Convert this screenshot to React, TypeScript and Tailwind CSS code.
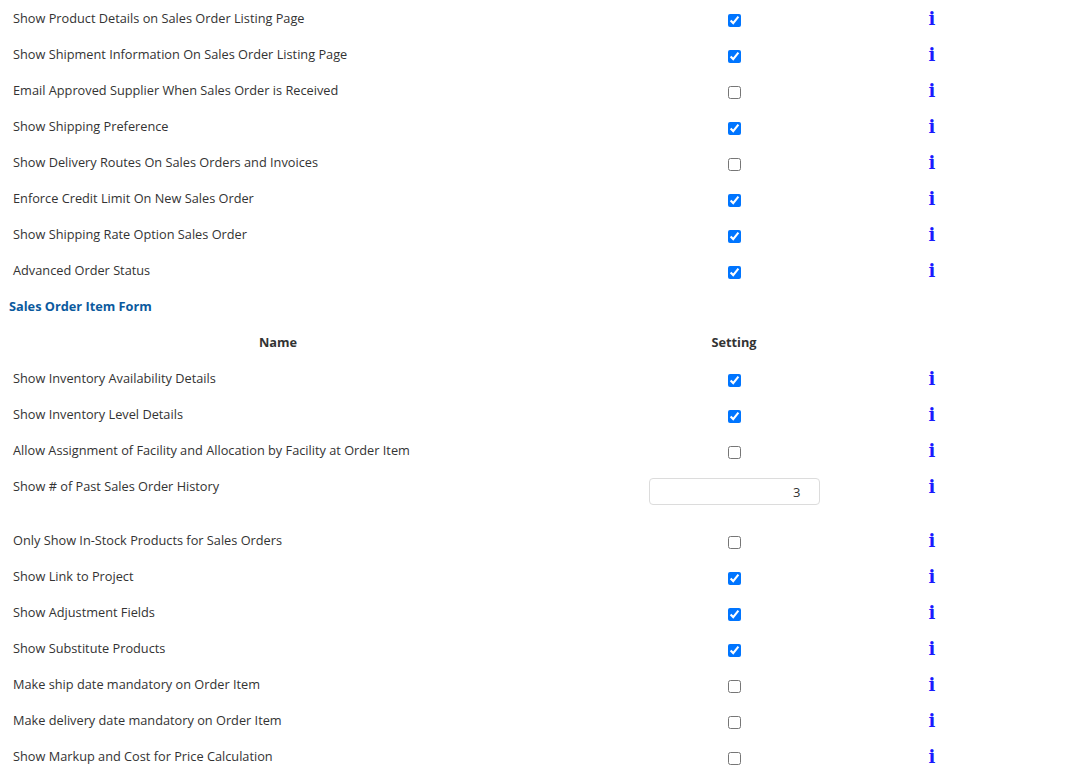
import React from 'react';

type Row = { label: string; checked?: boolean; number?: string };

const ORDER_ROWS: Row[] = [
  { label: 'Show Product Details on Sales Order Listing Page', checked: true },
  { label: 'Show Shipment Information On Sales Order Listing Page', checked: true },
  { label: 'Email Approved Supplier When Sales Order is Received', checked: false },
  { label: 'Show Shipping Preference', checked: true },
  { label: 'Show Delivery Routes On Sales Orders and Invoices', checked: false },
  { label: 'Enforce Credit Limit On New Sales Order', checked: true },
  { label: 'Show Shipping Rate Option Sales Order', checked: true },
  { label: 'Advanced Order Status', checked: true },
];

const ITEM_ROWS: Row[] = [
  { label: 'Show Inventory Availability Details', checked: true },
  { label: 'Show Inventory Level Details', checked: true },
  { label: 'Allow Assignment of Facility and Allocation by Facility at Order Item', checked: false },
  { label: 'Show # of Past Sales Order History', number: '3' },
  { label: 'Only Show In-Stock Products for Sales Orders', checked: false },
  { label: 'Show Link to Project', checked: true },
  { label: 'Show Adjustment Fields', checked: true },
  { label: 'Show Substitute Products', checked: true },
  { label: 'Make ship date mandatory on Order Item', checked: false },
  { label: 'Make delivery date mandatory on Order Item', checked: false },
  { label: 'Show Markup and Cost for Price Calculation', checked: false },
];

function InfoIcon() {
  return (
    <span
      className="block text-[18px] leading-[20px] font-bold text-[#1a1aff] text-center"
      style={{ fontFamily: '"DejaVu Serif", "Liberation Serif", serif' }}
    >
      i
    </span>
  );
}

function SettingRow({ row }: { row: Row }) {
  const tall = row.number !== undefined;
  return (
    <div className={`flex items-start ${tall ? 'h-[54px]' : 'h-[36px]'}`}>
      <div className="w-[556px] pl-[13px] pt-[8px] leading-[20px]">{row.label}</div>
      <div className="w-[356px] flex justify-center pt-[8px]">
        {tall ? (
          <input
            type="text"
            defaultValue={row.number}
            className="mt-[2px] w-[171px] h-[27px] border border-[#dcdcdc] rounded-[4px] text-right pr-[18px] text-[13px] text-[#333] outline-none"
          />
        ) : (
          <input
            type="checkbox"
            defaultChecked={row.checked}
            className="mt-[6px] w-[13px] h-[13px] m-0"
          />
        )}
      </div>
      <div className="w-[40px] pt-[9px]">
        <InfoIcon />
      </div>
    </div>
  );
}

export default function App() {
  return (
    <div
      className="bg-white text-[12.75px] text-[#333333] w-[1084px] min-h-[777px]"
      style={{ fontFamily: '"Open Sans", "Noto Sans", sans-serif' }}
    >
      {ORDER_ROWS.map((r) => (
        <SettingRow key={r.label} row={r} />
      ))}

      <div className="h-[36px] pl-[9px] pt-[8px] leading-[20px] font-bold text-[#0b5a9e]">
        Sales Order Item Form
      </div>

      <div className="flex h-[36px] font-bold text-[#333333]">
        <div className="w-[556px] text-center pt-[8px] leading-[20px]">Name</div>
        <div className="w-[356px] text-center pt-[8px] leading-[20px]">Setting</div>
        <div className="w-[40px]" />
      </div>

      {ITEM_ROWS.map((r) => (
        <SettingRow key={r.label} row={r} />
      ))}
    </div>
  );
}
